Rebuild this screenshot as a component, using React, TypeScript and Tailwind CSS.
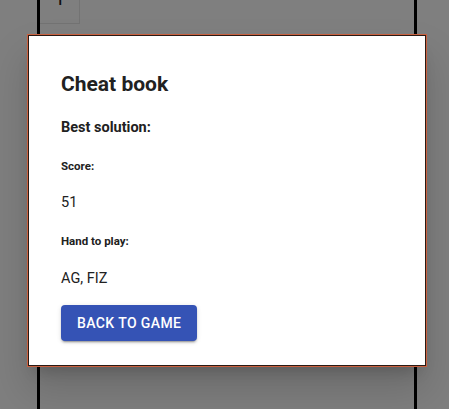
import React from 'react';

export default function App() {
  return (
    <div className="relative w-full h-[409px] overflow-hidden bg-white font-['Roboto',sans-serif]">
      {/* Game board behind the dialog */}
      <div className="flex h-full">
        <div className="w-[37px]" />
        <div className="w-[3px] h-full bg-black" />
        <div className="flex-1 flex flex-col">
          <div className="relative w-[40px] h-[24px] border-r border-b border-[#e6e6e6]">
            <span className="absolute left-[14px] top-[-12px] text-[20px] leading-5 text-[#222]">1</span>
          </div>
        </div>
        <div className="w-[3px] h-full bg-black" />
        <div className="w-[32px]" />
      </div>

      {/* Backdrop */}
      <div className="absolute inset-0 bg-black/50" />

      {/* Dialog */}
      <div className="absolute left-[28px] top-[35px] w-[398px] h-[331px] bg-white border border-[#2a1a14] outline outline-1 outline-[#c9603f] shadow-[0_11px_15px_-7px_rgba(0,0,0,0.2),0_24px_38px_3px_rgba(0,0,0,0.14)]">
        <div className="flex flex-col items-start px-8 pt-8 text-[#212121]">
          <h2 className="text-[21px] leading-8 font-bold">Cheat book</h2>
          <p className="mt-[18px] text-[14.5px] leading-5 font-bold">Best solution:</p>
          <p className="mt-5 text-[11.5px] leading-4 font-bold">Score:</p>
          <p className="mt-[19px] text-[14.5px] leading-5">51</p>
          <p className="mt-5 text-[11.5px] leading-4 font-bold">Hand to play:</p>
          <p className="mt-5 text-[14.5px] leading-5">AG, FIZ</p>
          <button className="mt-4 h-9 px-4 rounded bg-[#3553b5] text-white text-[14px] font-medium tracking-[0.4px] uppercase shadow-[0_3px_1px_-2px_rgba(0,0,0,0.2),0_2px_2px_0_rgba(0,0,0,0.14),0_1px_5px_0_rgba(0,0,0,0.12)]">
            Back to game
          </button>
        </div>
      </div>
    </div>
  );
}
